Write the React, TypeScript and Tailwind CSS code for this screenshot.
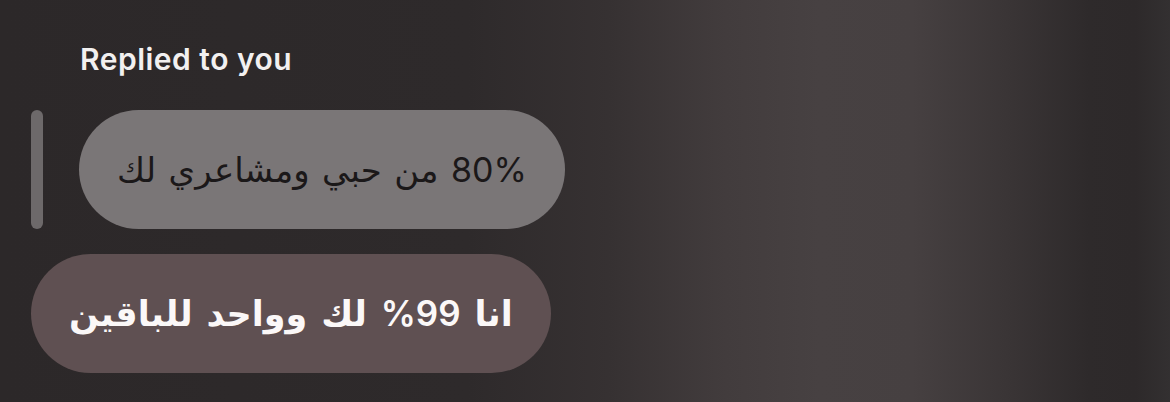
import React, { FC } from "react";

const font = { fontFamily: '"Inter", "DejaVu Sans", "Noto Sans", sans-serif' };

interface BubbleProps {
  text: string;
  className: string;
}

const Bubble: FC<BubbleProps> = ({ text, className }) => {
  return (
    <div
      dir="rtl"
      className={`flex h-[119px] items-center whitespace-nowrap rounded-full px-[38px] ${className}`}
    >
      {text}
    </div>
  );
};

const App: FC = () => {
  return (
    <div
      style={font}
      className="flex h-[402px] w-[1170px] flex-col overflow-hidden bg-[linear-gradient(90deg,#2c2829_0%,#2e2a2b_40%,#363132_52%,#423c3d_62%,#474142_70%,#464041_78%,#3a3536_86%,#2e2a2b_93%,#2d292a_97%,#333031_100%)]"
    >
      <p className="pl-[80px] pt-[43px] text-[30px] font-semibold leading-[32px] tracking-[0.5px] text-[#f2f0f0]">
        Replied to you
      </p>

      {/* quoted message with the reply bar */}
      <div className="mt-[35px] flex items-center pl-[31px]">
        <div className="h-[119px] w-[12px] rounded-full bg-[#6d696a]" />
        <Bubble
          text="80% من حبي ومشاعري لك"
          className="ml-[36px] bg-[#7a7677] text-[34px] tracking-[0.2px] text-[#1b1819] [word-spacing:3px]"
        />
      </div>

      <div className="mt-[25px] flex pl-[31px]">
        <Bubble
          text="انا 99% لك وواحد للباقين"
          className="bg-[#5f5052] text-[35px] font-semibold text-[#fbf8f8] [word-spacing:5px]"
        />
      </div>
    </div>
  );
};

export default App;
